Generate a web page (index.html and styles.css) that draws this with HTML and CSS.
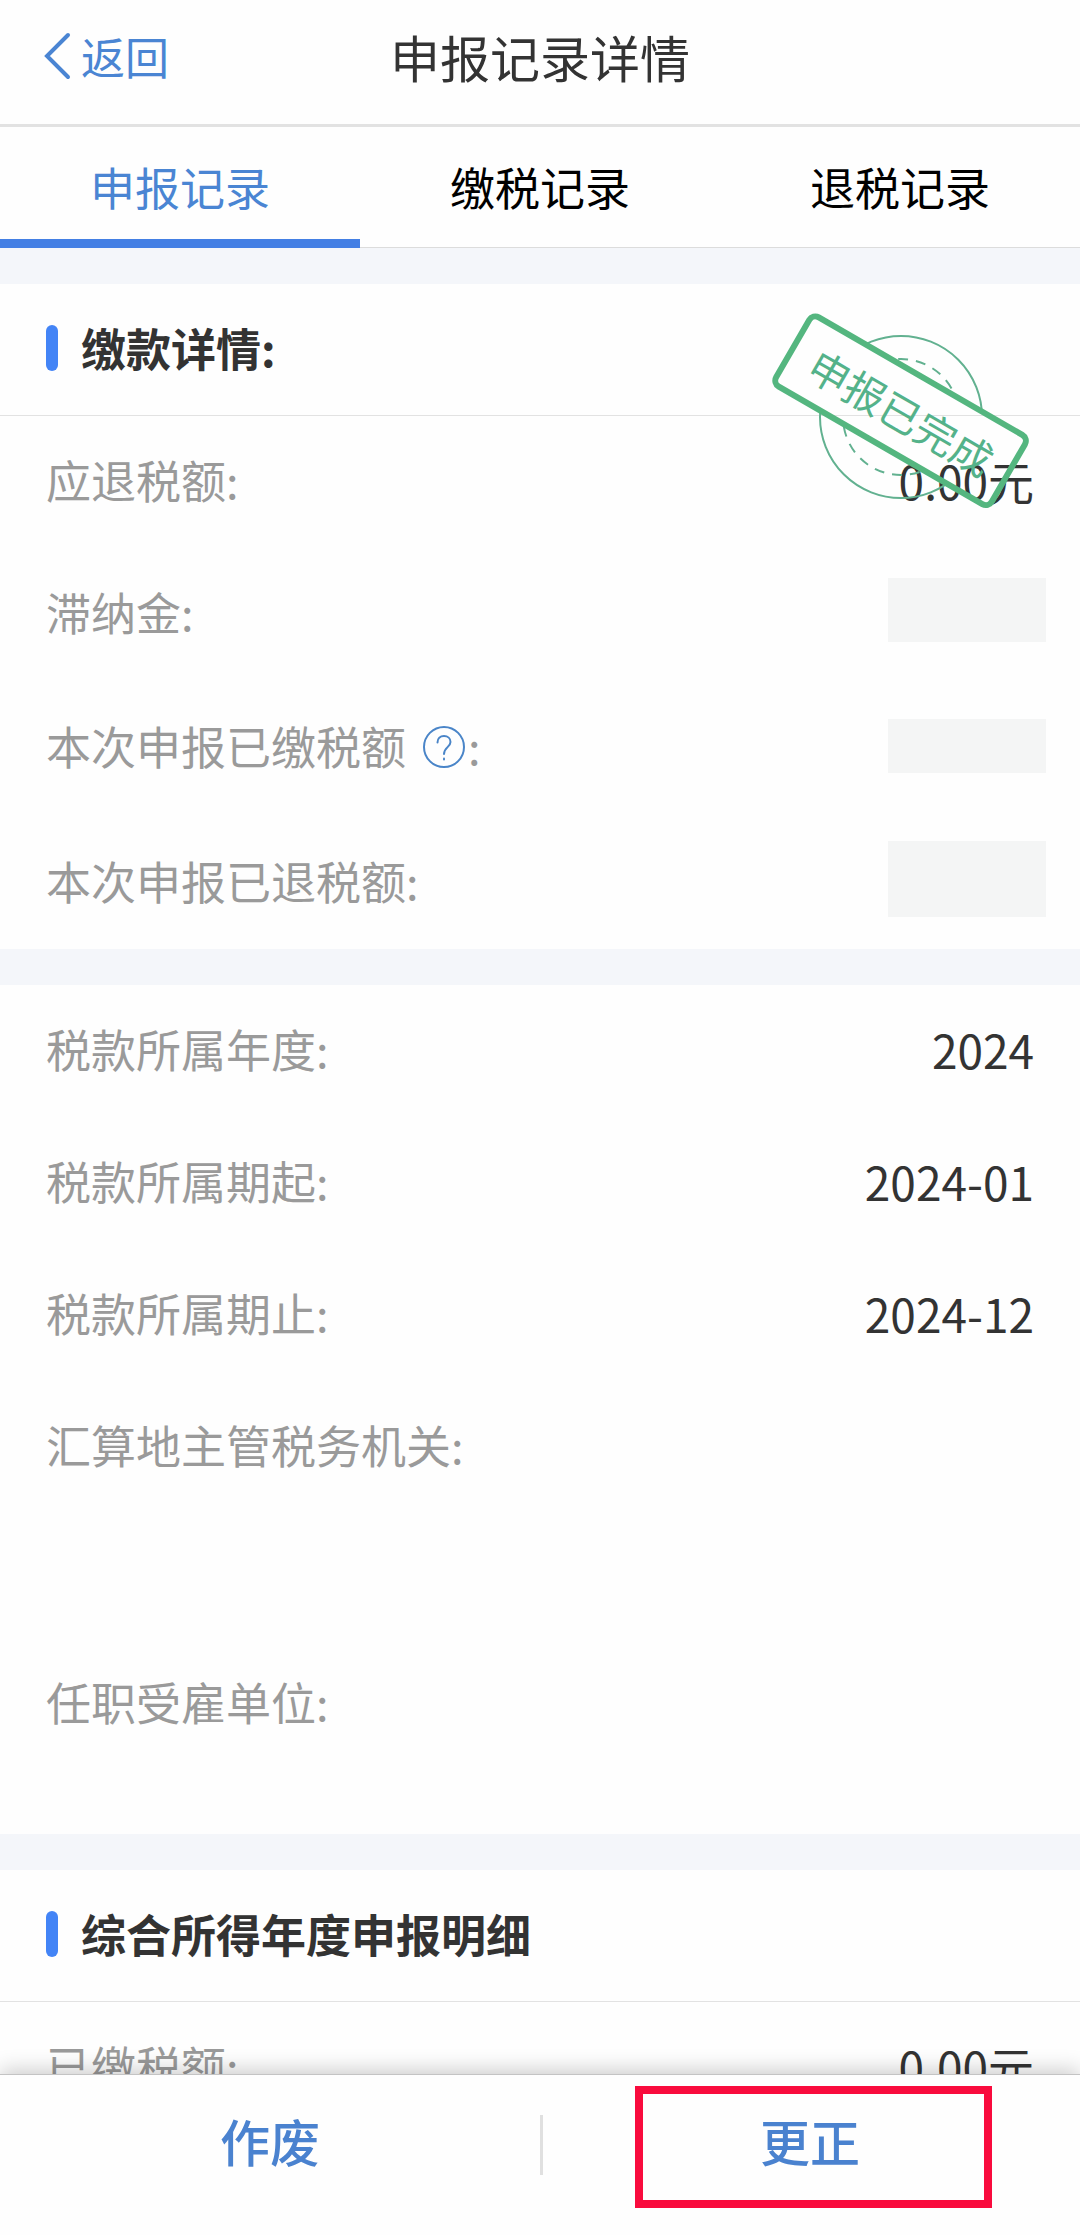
FILE: index.html
```html
<!DOCTYPE html>
<html lang="zh-CN">
<head>
<meta charset="utf-8">
<meta name="viewport" content="width=device-width, initial-scale=1">
<title>申报记录详情</title>
<link rel="stylesheet" href="styles.css">
</head>
<body>
<header class="topbar">
  <a class="back" href="#">
    <svg class="back-icon" viewBox="0 0 28 48" aria-hidden="true"><path d="M25 3 4 24l21 21"/></svg>返回
  </a>
  <h1 class="title">申报记录详情</h1>
</header>
<nav class="tabs">
  <a class="tab tab-active" href="#">申报记录</a>
  <a class="tab" href="#">缴税记录</a>
  <a class="tab" href="#">退税记录</a>
</nav>
<main class="content">
  <section class="card">
    <h2 class="card-title">缴款详情:</h2>
    <svg class="stamp" viewBox="0 0 264 204" role="img" aria-label="申报已完成">
      <defs>
        <clipPath id="outside"><path clip-rule="evenodd" d="M0 0H264V204H0ZM45.600 5.030 259.500 128.530 219.900 197.100 6 73.600Z"/></clipPath>
      </defs>
      <g clip-path="url(#outside)">
        <circle class="stamp-ring" cx="133" cy="107" r="81"/>
        <circle class="stamp-ring stamp-dash" cx="133" cy="107" r="58"/>
      </g>
      <g transform="rotate(30 133 101)">
        <rect class="stamp-frame" x="8" y="61" width="249" height="80" rx="7"/>
        <text class="stamp-text" x="134" y="119">申报已完成</text>
      </g>
    </svg>
    <dl class="rows">
      <div class="row"><dt>应退税额:</dt><dd>0.00元</dd></div>
      <div class="row"><dt>滞纳金:</dt><dd class="masked masked-mid"></dd></div>
      <div class="row row-help">
        <dt>本次申报已缴税额<button class="help" type="button" aria-label="说明"><svg viewBox="0 0 42 42" aria-hidden="true"><circle cx="21" cy="21" r="20"/><path d="M14.500 16.500c0-4 2.700-6.500 6.500-6.500s6.500 2.400 6.500 6c0 5-6.500 5.500-6.500 12"/><path d="M21 32.500v1"/></svg></button>:</dt>
        <dd class="masked masked-low"></dd>
      </div>
      <div class="row"><dt>本次申报已退税额:</dt><dd class="masked masked-tall"></dd></div>
    </dl>
  </section>
  <section class="card">
    <dl class="rows">
      <div class="row"><dt>税款所属年度:</dt><dd>2024</dd></div>
      <div class="row"><dt>税款所属期起:</dt><dd>2024-01</dd></div>
      <div class="row"><dt>税款所属期止:</dt><dd>2024-12</dd></div>
      <div class="row row-three"><dt>汇算地主管税务机关:</dt><dd></dd></div>
      <div class="row row-two"><dt>任职受雇单位:</dt><dd></dd></div>
    </dl>
  </section>
  <section class="card">
    <h2 class="card-title">综合所得年度申报明细</h2>
    <dl class="rows">
      <div class="row"><dt>已缴税额:</dt><dd>0.00元</dd></div>
    </dl>
  </section>
</main>
<footer class="actions">
  <button class="action" type="button">作废</button>
  <button class="action action-marked" type="button">更正</button>
</footer>
</body>
</html>
```
FILE: styles.css
```css
* { box-sizing: border-box; }

body {
  display: flex;
  flex-direction: column;
  height: 100vh;
  margin: 0;
  overflow: hidden;
  background: #fefefe;
  color: #333;
  font-family: "Noto Sans CJK SC", sans-serif;
  font-size: 45px;
  line-height: 64px;
}

a { color: inherit; text-decoration: none; }

button {
  padding: 0;
  border: 0;
  background: none;
  font: inherit;
}

.topbar {
  display: grid;
  flex: none;
  grid-template-columns: 1fr auto 1fr;
  align-items: center;
  padding: 24px 43px 36px;
  border-bottom: 3px solid #e2e2e2;
}

.back {
  display: flex;
  align-items: center;
  gap: 10px;
  color: #4a85d3;
  font-size: 44px;
}

.back-icon {
  width: 28px;
  height: 48px;
  fill: none;
  stroke: currentColor;
  stroke-width: 4;
  stroke-linecap: round;
}

.title {
  margin: 0;
  font-size: 50px;
  font-weight: 400;
}

.tabs {
  display: grid;
  flex: none;
  grid-template-columns: repeat(3, 1fr);
  box-shadow: inset 0 -1px #dcdcdc;
  color: #000;
  text-align: center;
}

.tab { padding: 28px 0 29px; }

.tab-active {
  color: #4a85d3;
  box-shadow: inset 0 -9px #437fe4;
}

.content {
  flex: 1;
  min-height: 0;
  overflow: hidden;
}

.card {
  position: relative;
  border-top: 36px solid #f4f6fa;
}

.card-title {
  display: flex;
  align-items: center;
  gap: 23px;
  margin: 0;
  padding: 32px 46px 35px;
  border-bottom: 1px solid #e2e2e2;
  font-size: 45px;
  font-weight: 700;
}

.card-title::before {
  width: 12px;
  height: 46px;
  border-radius: 6px;
  background: #4384f6;
  content: "";
}

.rows { margin: 0; }

.row {
  display: flex;
  align-items: flex-start;
  justify-content: space-between;
  min-height: 132px;
  padding: 32px 46px;
}

.row dt {
  display: flex;
  align-items: center;
  color: #9a9a9a;
}

.row dd {
  margin: 0;
  font-size: 46px;
}

.row-help {
  min-height: 137px;
  padding-top: 34px;
}

.row-two { min-height: 196px; }
.row-three { min-height: 257px; }

.row .masked {
  align-self: center;
  width: 158px;
  margin: -8px -12px 0 0;
  background: #f4f5f5;
}

.masked-mid { height: 64px; }
.masked-low { height: 54px; }
.masked-tall { height: 76px; }

.help {
  width: 42px;
  height: 42px;
  margin: 2px 3px 0 17px;
}

.help svg {
  display: block;
  fill: none;
  stroke: #4a85c8;
  stroke-width: 2;
  stroke-linecap: round;
}

.stamp {
  position: absolute;
  top: 26px;
  right: 48px;
  width: 264px;
  height: 204px;
}

.stamp-ring {
  fill: none;
  stroke: #62b190;
  stroke-width: 2;
}

.stamp-dash { stroke-dasharray: 10 8; }

.stamp-frame {
  fill: none;
  stroke: #54b67f;
  stroke-width: 6;
}

.stamp-text {
  fill: #54b28a;
  font-size: 41px;
  text-anchor: middle;
}

.actions {
  position: relative;
  display: grid;
  flex: none;
  grid-template-columns: 1fr 1fr;
  border-top: 1px solid #c4c4c4;
  background: #fefefe;
  box-shadow: 0 -4px 20px rgba(0, 0, 0, 0.2);
}

.actions::before {
  position: absolute;
  top: 40px;
  left: 50%;
  width: 3px;
  height: 60px;
  background: #e0e0e0;
  content: "";
}

.action {
  position: relative;
  padding: 33px 0 63px;
  color: #4a82cf;
  font-size: 50px;
  font-weight: 500;
}

.action-marked::after {
  position: absolute;
  inset: 11px 88px 27px 95px;
  border: 8px solid #f90b3d;
  content: "";
}
```
